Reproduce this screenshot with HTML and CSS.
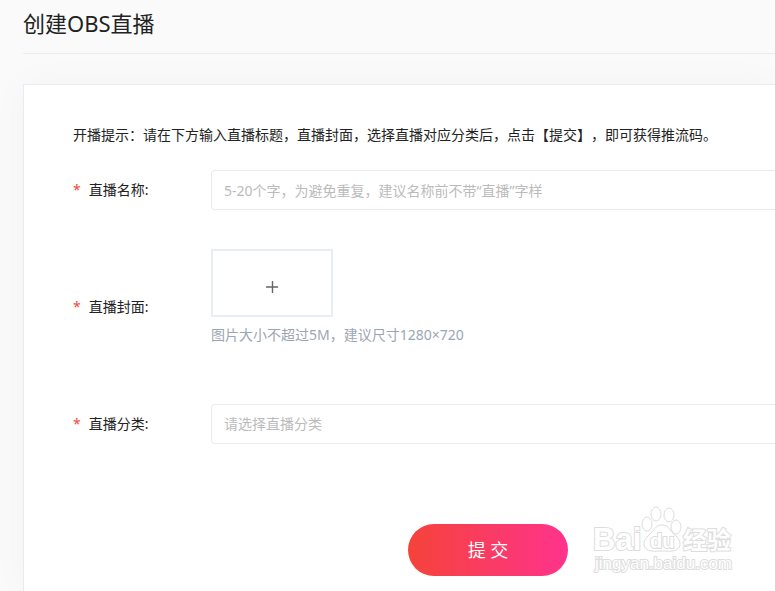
FILE: index.html
```html
<!DOCTYPE html>
<html lang="zh-CN">
<head>
    <meta charset="UTF-8">
    <meta name="viewport" content="width=device-width, initial-scale=1.0">
    <title>创建OBS直播</title>
    <link rel="stylesheet" href="styles.css">
</head>
<body>
    <div class="page">
        <h1>创建OBS直播</h1>
        <form class="card">
            <p class="notice">开播提示：请在下方输入直播标题，直播封面，选择直播对应分类后，点击【提交】，即可获得推流码。</p>

            <div class="row">
                <label for="liveName"><span class="required">*</span>直播名称:</label>
                <input type="text" id="liveName" class="field" placeholder="5-20个字，为避免重复，建议名称前不带“直播”字样">
            </div>

            <div class="row">
                <label for="liveCover"><span class="required">*</span>直播封面:</label>
                <div class="cover">
                    <button type="button" id="liveCover" class="upload" aria-label="上传封面">
                        <svg width="12" height="12" viewBox="0 0 12 12"><path d="M0 6h12M6.5 0v12" fill="none" stroke="#666" stroke-width="1.4"/></svg>
                    </button>
                    <p class="tip">图片大小不超过5M，建议尺寸1280×720</p>
                </div>
            </div>

            <div class="row">
                <label for="liveType"><span class="required">*</span>直播分类:</label>
                <select id="liveType" class="field">
                    <option value="">请选择直播分类</option>
                </select>
            </div>

            <div class="actions">
                <button type="submit" class="submit">提 交</button>
            </div>
        </form>
    </div>

    <svg class="watermark" width="144" height="74" viewBox="0 0 144 74" aria-hidden="true">
        <g class="outline">
            <text class="brand" x="0" y="45">Bai</text>
            <ellipse cx="54" cy="19" rx="5" ry="7"/>
            <ellipse cx="63" cy="9" rx="5" ry="7"/>
            <ellipse cx="76" cy="10" rx="5" ry="7"/>
            <ellipse cx="83" cy="22" rx="5" ry="7"/>
            <path d="M69 20c-7 0-8 6-13 10-6 5-7 12-1 15 4 2 9 1 14 1s10 1 14-1c6-3 5-10-1-15-5-4-6-10-13-10z"/>
            <text class="du" x="57" y="43">du</text>
            <text class="cn" x="90" y="44">经验</text>
            <text class="site" x="2" y="64">jingyan.baidu.com</text>
        </g>
    </svg>
</body>
</html>
```

FILE: styles.css
```css
* {
    box-sizing: border-box;
}

body {
    margin: 0;
    font-family: "Noto Sans", "Noto Sans CJK SC", sans-serif;
    font-size: 14px;
    line-height: 20px;
    color: #222;
    background: #fafafa;
    text-spacing-trim: space-all;
}

.page {
    display: flex;
    flex-direction: column;
    min-height: 100vh;
    padding-left: 23px;
}

h1 {
    margin: 0 0 30px;
    padding: 8px 0 15px;
    border-bottom: 1px solid #e9edf2;
    font-size: 22px;
    line-height: 30px;
    font-weight: 400;
}

.card {
    flex: 1;
    padding: 40px 0 15px 49px;
    background: #fff;
    border: 1px solid #e8ecf2;
    border-width: 1px 0 0 1px;
    box-shadow: 0 0 36px rgba(0, 0, 0, 0.03);
}

.notice {
    margin: 0 0 25px;
}

.row {
    display: flex;
    align-items: center;
    margin-bottom: 39px;
}

.row label {
    flex: 0 0 138px;
}

.required {
    margin-right: 8px;
    color: #f5483b;
}

.field {
    flex: 1;
    min-width: 0;
    height: 40px;
    padding: 0 12px;
    border: 1px solid #e8ecf2;
    border-right: none;
    border-radius: 4px 0 0 4px;
    background: #fff;
    font: inherit;
    color: #bbb;
    outline: none;
    appearance: none;
}

.field::placeholder {
    color: #bbb;
}

.field:focus {
    border-color: #fd3275;
}

.cover {
    height: 116px;
}

.upload {
    display: flex;
    align-items: center;
    justify-content: center;
    width: 122px;
    height: 68px;
    padding: 8px 0 0;
    border: 2px solid #e8edf3;
    background: #fff;
    cursor: pointer;
}

.tip {
    margin: 8px 0 0;
    color: #9ba6b5;
}

.actions {
    padding: 41px 0 0 335px;
}

.submit {
    width: 160px;
    height: 52px;
    border: none;
    border-radius: 26px;
    background: linear-gradient(90deg, #f5433a, #ff338c);
    font: inherit;
    font-size: 18px;
    color: #fff;
    cursor: pointer;
}

/* Watermark */
.watermark {
    position: absolute;
    top: 505px;
    left: 593px;
    pointer-events: none;
}

.outline {
    fill: #fff;
    stroke: #ddd;
    stroke-width: 1px;
}

.outline text {
    stroke-width: 2px;
    paint-order: stroke;
}

.brand {
    font-family: "Liberation Sans", sans-serif;
    font-size: 31px;
    font-weight: 700;
}

.du {
    font-family: "Liberation Sans", sans-serif;
    font-size: 20px;
    font-weight: 700;
}

.cn {
    font-family: "Noto Sans CJK SC", sans-serif;
    font-size: 24px;
    font-weight: 700;
}

.site {
    font-family: "Liberation Sans", sans-serif;
    font-size: 17px;
}
```
